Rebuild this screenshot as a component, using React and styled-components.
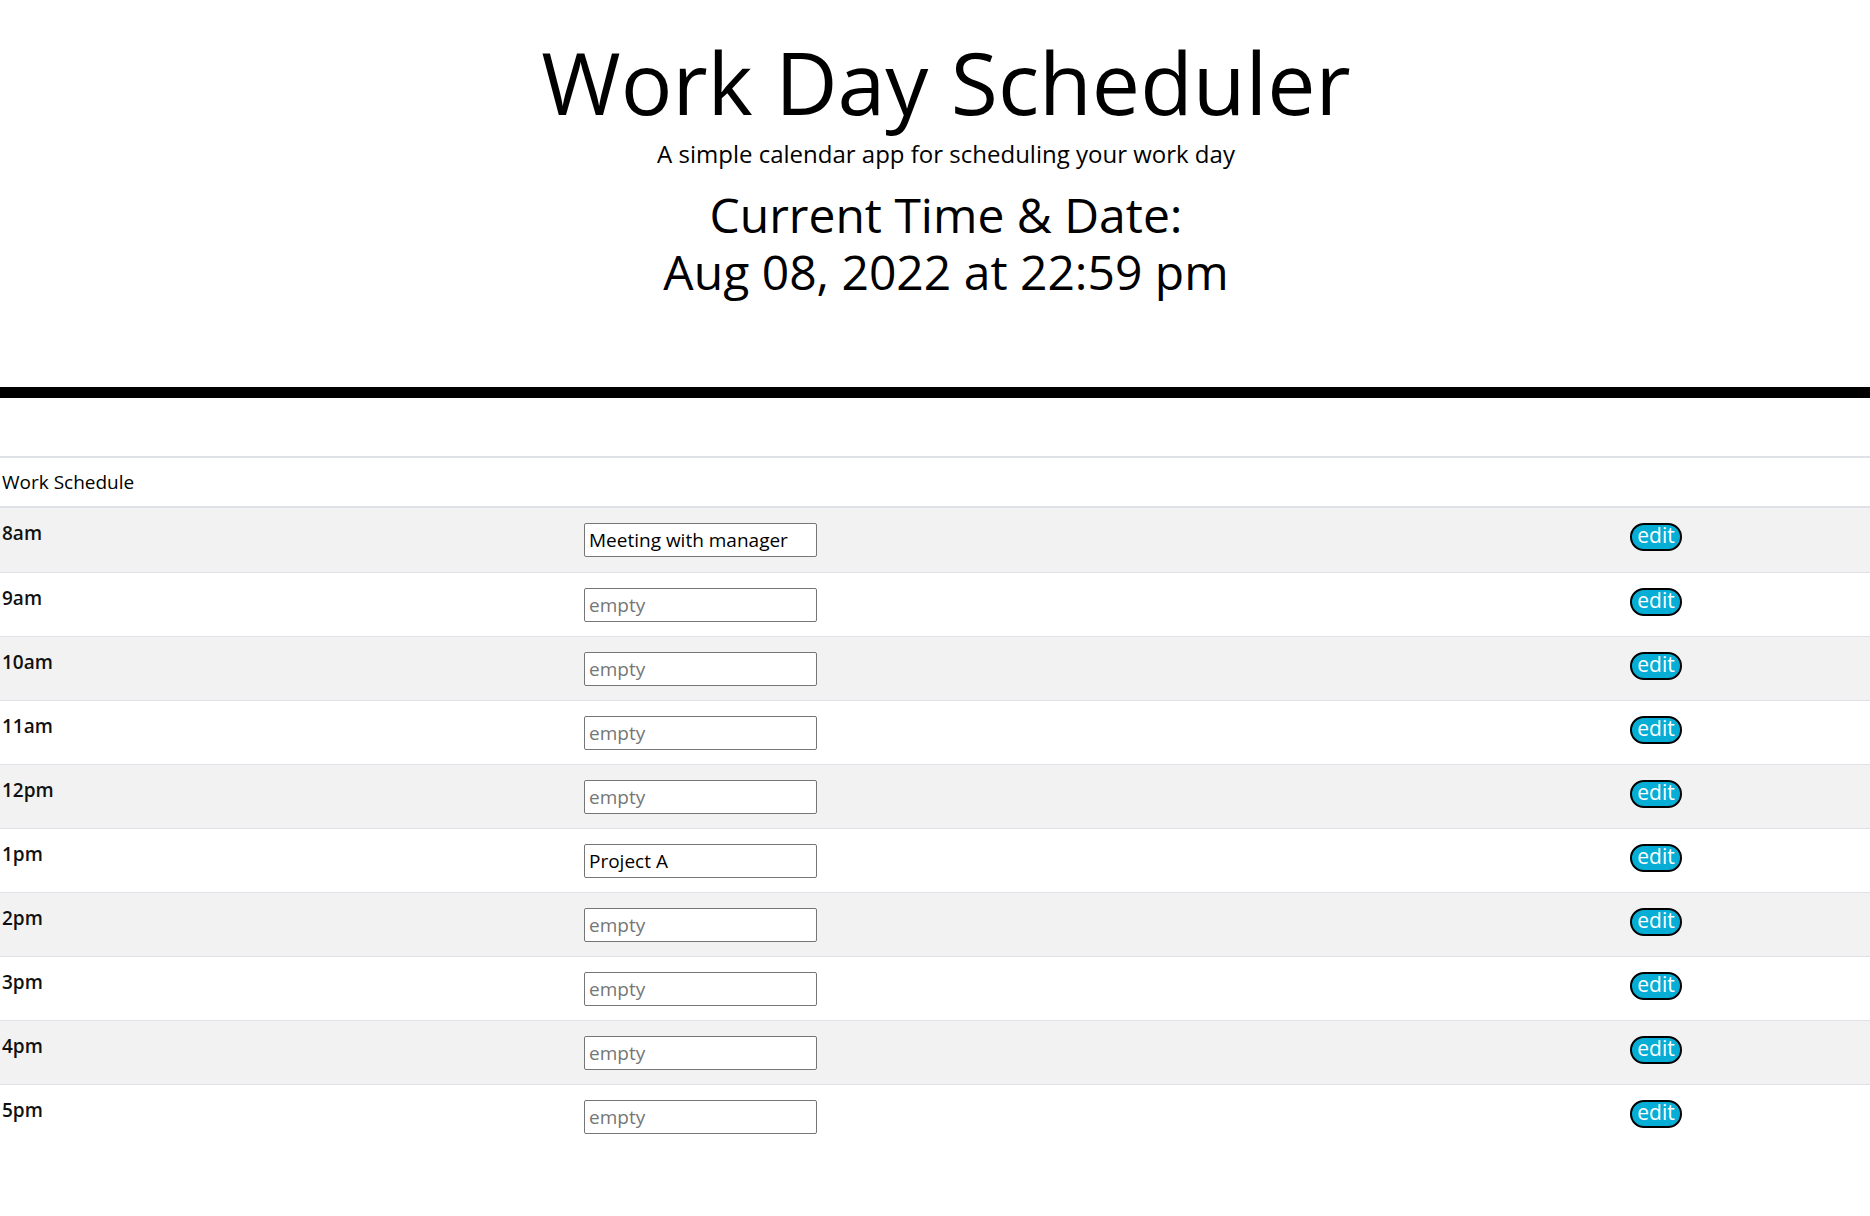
import React from 'react'
import styled, { createGlobalStyle } from 'styled-components'

const hours = [
  { label: '8am', text: 'Meeting with manager' },
  { label: '9am', text: '' },
  { label: '10am', text: '' },
  { label: '11am', text: '' },
  { label: '12pm', text: '' },
  { label: '1pm', text: 'Project A' },
  { label: '2pm', text: '' },
  { label: '3pm', text: '' },
  { label: '4pm', text: '' },
  { label: '5pm', text: '' },
]

const GlobalStyle = createGlobalStyle`
  * { box-sizing: border-box; }
  body {
    margin: 0;
    background: #fff;
    color: #000;
    font-family: 'Open Sans', 'Liberation Sans', sans-serif;
  }
`

const Header = styled.header`
  text-align: center;
  padding: 30px 0 0 22px;
  height: 398px;
  border-bottom: 11px solid #000;
`

const Title = styled.h1`
  margin: 0;
  font-size: 86px;
  font-weight: 400;
  line-height: 1.2;
`

const Lead = styled.p`
  margin: 5px 0 0;
  font-size: 24px;
  line-height: 1.3;
`

const Clock = styled.p`
  margin: 17px 0 0;
  font-size: 48px;
  line-height: 57px;
`

const Schedule = styled.section`
  margin-top: 58px;
  border-top: 2px solid #dee2e6;
`

const HeadRow = styled.div`
  height: 50px;
  padding: 0 2px;
  display: flex;
  align-items: center;
  border-bottom: 2px solid #dee2e6;
  font-size: 19px;
  font-weight: 500;
  color: #000;
`

const Row = styled.div`
  display: grid;
  grid-template-columns: 584px 1046px 1fr;
  height: 64px;
  background: ${(p) => (p.$shaded ? '#f2f2f2' : '#fff')};
  border-top: ${(p) => (p.$first ? 'none' : '1px solid #dee2e6')};
`

const Hour = styled.div`
  padding: 13px 2px 0;
  font-size: 19px;
  font-weight: 600;
  line-height: 1.3;
  color: #111;
`

const Cell = styled.div`
  display: flex;
  align-items: center;
`

const Task = styled.input`
  width: 233px;
  height: 34px;
  margin: 0;
  padding: 0 4px;
  border: 1px solid #767676;
  border-radius: 2px;
  background: #fff;
  font-family: inherit;
  font-size: 19px;
  color: #000;

  &::placeholder {
    color: #767676;
  }
`

const EditButton = styled.button`
  width: 52px;
  height: 28px;
  margin-top: -6px;
  padding: 0 0 3px;
  border: 2px solid #000;
  border-radius: 14px;
  background: #06aed5;
  color: #fff;
  font-family: inherit;
  font-size: 21px;
  line-height: 1;
  cursor: pointer;
`

export default function App() {
  return (
    <>
      <GlobalStyle />
      <Header>
        <Title>Work Day Scheduler</Title>
        <Lead>A simple calendar app for scheduling your work day</Lead>
        <Clock>
          Current Time &amp; Date:
          <br />
          Aug 08, 2022 at 22:59 pm
        </Clock>
      </Header>
      <Schedule>
        <HeadRow>Work Schedule</HeadRow>
        {hours.map((h, i) => (
          <Row key={h.label} $shaded={i % 2 === 0} $first={i === 0}>
            <Hour>{h.label}</Hour>
            <Cell>
              <Task defaultValue={h.text} placeholder="empty" />
            </Cell>
            <Cell>
              <EditButton>edit</EditButton>
            </Cell>
          </Row>
        ))}
      </Schedule>
    </>
  )
}
